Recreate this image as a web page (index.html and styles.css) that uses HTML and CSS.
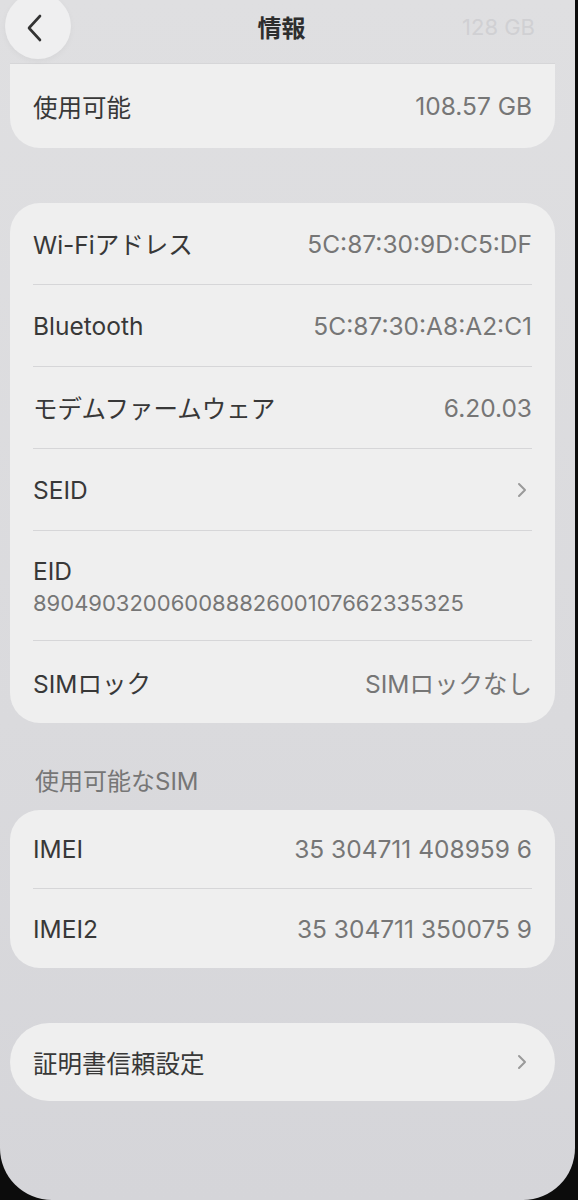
FILE: index.html
```html
<!DOCTYPE html>
<html lang="ja">

<head>
  <meta charset="UTF-8" />
  <meta name="viewport" content="width=device-width, initial-scale=1.0" />
  <title>情報</title>
  <link rel="stylesheet" href="styles.css">
</head>

<body>
  <div class="screen">
    <header class="nav">
      <button class="back-button" aria-label="戻る">
        <svg width="22" height="30" viewBox="0 0 22 30">
          <path d="M16 3 L5 15 L16 27" fill="none" stroke="#333" stroke-width="2.6" stroke-linecap="round" stroke-linejoin="round" />
        </svg>
      </button>
      <h1 class="nav-title">情報</h1>
      <div class="nav-ghost">128 GB</div>
    </header>

    <div class="group group-top">
      <div class="row">
        <span class="label">使用可能</span>
        <span class="value">108.57 GB</span>
      </div>
    </div>

    <div class="group">
      <div class="row">
        <span class="label">Wi-Fiアドレス</span>
        <span class="value">5C:87:30:9D:C5:DF</span>
      </div>
      <div class="row">
        <span class="label">Bluetooth</span>
        <span class="value">5C:87:30:A8:A2:C1</span>
      </div>
      <div class="row">
        <span class="label">モデムファームウェア</span>
        <span class="value">6.20.03</span>
      </div>
      <div class="row">
        <span class="label">SEID</span>
        <span class="chevron">
          <svg width="12" height="18" viewBox="0 0 12 18">
            <path d="M3 3 L9 9 L3 15" fill="none" stroke="#9a9a9a" stroke-width="2" stroke-linecap="round" stroke-linejoin="round" />
          </svg>
        </span>
      </div>
      <div class="row row-stack">
        <span class="label">EID</span>
        <span class="sub-value">89049032006008882600107662335325</span>
      </div>
      <div class="row">
        <span class="label">SIMロック</span>
        <span class="value">SIMロックなし</span>
      </div>
    </div>

    <div class="section-title">使用可能なSIM</div>

    <div class="group group-sim">
      <div class="row">
        <span class="label">IMEI</span>
        <span class="value">35 304711 408959 6</span>
      </div>
      <div class="row">
        <span class="label">IMEI2</span>
        <span class="value">35 304711 350075 9</span>
      </div>
    </div>

    <div class="group group-pill">
      <div class="row">
        <span class="label">証明書信頼設定</span>
        <span class="chevron">
          <svg width="12" height="18" viewBox="0 0 12 18">
            <path d="M3 3 L9 9 L3 15" fill="none" stroke="#9a9a9a" stroke-width="2" stroke-linecap="round" stroke-linejoin="round" />
          </svg>
        </span>
      </div>
    </div>
  </div>
</body>

</html>
```

FILE: styles.css
```css
* {
  box-sizing: border-box;
  margin: 0;
  padding: 0;
}

:root {
  --page-bg: #dcdcdf;
  --card-bg: #efefef;
  --line: #d6d6d8;
  --label: #383838;
  --value: #767676;
}

body {
  font-family: 'Inter', 'Noto Sans CJK JP', sans-serif;
  background: #0c0c0c;
  width: 578px;
  height: 1200px;
  overflow: hidden;
}

.screen {
  width: 575px;
  height: 1200px;
  background: linear-gradient(180deg, #dfdfe1 0%, #dadadd 60%, #d5d5d9 100%);
  border-radius: 0 0 52px 52px;
  overflow: hidden;
}

.nav {
  height: 63px;
  display: grid;
  grid-template-columns: 120px 1fr 120px;
  align-items: center;
}

.back-button {
  width: 66px;
  height: 66px;
  margin: -12px 0 0 5px;
  border: none;
  border-radius: 50%;
  background: #efeff0;
  display: flex;
  align-items: center;
  justify-content: center;
  padding-top: 12px;
  box-shadow: 0 2px 6px rgba(0, 0, 0, 0.04);
}

.back-button svg {
  margin-left: -6px;
  margin-top: -8px;
}

.nav-title {
  text-align: center;
  font-size: 24px;
  font-weight: 600;
  color: #2e2e2e;
  margin-left: -12px;
  margin-top: -10px;
}

.nav-ghost {
  text-align: right;
  padding-right: 40px;
  margin-top: -10px;
  font-size: 22px;
  color: #d0d0d3;
}

.group {
  background: var(--card-bg);
  margin: 0 20px 0 10px;
  border-radius: 30px;
  padding: 0 23px 0 23px;
}

.group-top {
  border-radius: 0 0 30px 30px;
  border-top: 1px solid var(--line);
  margin-bottom: 55px;
}

.row {
  display: flex;
  align-items: center;
  justify-content: space-between;
  height: 82px;
  border-bottom: 1px solid var(--line);
}

.row:last-child {
  border-bottom: none;
}

.group-top .row {
  height: 84px;
}

.label {
  font-size: 24.5px;
  color: var(--label);
}

.value {
  font-size: 24.5px;
  color: var(--value);
}

.chevron {
  display: flex;
  margin-right: 4px;
}

.row-stack {
  height: 110px;
  flex-direction: column;
  align-items: flex-start;
  justify-content: center;
  gap: 4px;
}

.sub-value {
  font-size: 22px;
  color: var(--value);
}

.section-title {
  font-size: 24px;
  color: #767676;
  padding: 44px 0 13px 35px;
  line-height: 30px;
}

.group-sim .row {
  height: 79px;
}

.group-pill {
  margin-top: 55px;
  border-radius: 39px;
}

.group-pill .row {
  height: 78px;
}
```
